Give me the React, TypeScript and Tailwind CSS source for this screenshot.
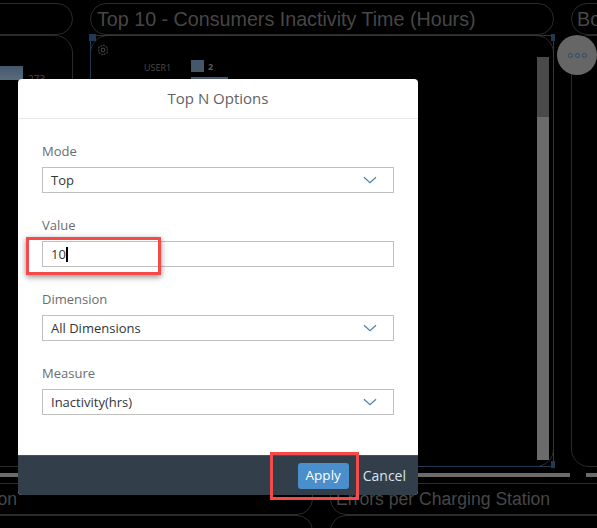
import React from 'react';

const fontStack = "font-['Open_Sans','Noto_Sans',sans-serif]";
const titleFont = "font-['Liberation_Sans',Arial,sans-serif]";

interface FieldProps {
  label: string;
  value: string;
  isSelect?: boolean;
  showCaret?: boolean;
}

const Chevron: React.FC = () => (
  <svg width="14" height="8" viewBox="0 0 14 8" fill="none" className="shrink-0">
    <path d="M1 1.2 7 6.6 13 1.2" stroke="#4f7fac" strokeWidth="1.2" />
  </svg>
);

const Field: React.FC<FieldProps> = ({ label, value, isSelect = true, showCaret = false }) => (
  <div className="flex flex-col">
    <label className="h-[25px] text-[13px] leading-[18px] text-[#6a6d70]">{label}</label>
    <div className="h-[26px] border border-[#bfbfbf] bg-white pl-2 pr-[16px] flex items-center justify-between">
      <span className="flex items-center text-[13px] leading-[20px] text-[#32363a]">
        {value}
        {showCaret && <span className="w-[2px] h-[15px] bg-black" />}
      </span>
      {isSelect && <Chevron />}
    </div>
  </div>
);

const GearIcon: React.FC = () => (
  <svg width="12" height="12" viewBox="0 0 12 12" fill="none" stroke="#3d3d3d" strokeWidth="1.2">
    <path d="M6 1 10.3 3.5V8.5L6 11 1.7 8.5V3.5Z" strokeDasharray="2 1" />
    <circle cx="6" cy="6" r="1.8" />
  </svg>
);

const Dashboard: React.FC = () => (
  <div className="flex flex-col pt-[3px]">
    {/* Top row of tiles */}
    <div className="grid grid-cols-[133px_464px_100px] gap-x-[17px] -ml-[60px] w-[760px]">
      <div className="h-[32px] rounded-[16px] border border-[#2b2b2b]" />
      <div className="h-[32px] rounded-[16px] border border-[#2b2b2b] pl-[6px] pt-[2px] flex items-center">
        <span className={`text-[19.7px] text-[#474747] whitespace-nowrap ${titleFont}`}>
          Top 10 - Consumers Inactivity Time (Hours)
        </span>
      </div>
      <div className="h-[32px] rounded-[16px] border border-[#2b2b2b] pl-[5px] pt-[2px] flex items-center">
        <span className={`text-[19.7px] text-[#474747] ${titleFont}`}>Bo</span>
      </div>

      <div className="h-[432px] rounded-[18px] border border-[#2b2b2b] relative">
        <div className="absolute left-0 top-[30px] w-[82px] h-[14px] bg-gradient-to-b from-[#45586b] to-[#5a6c7e]" />
        <span className="absolute left-[87px] top-[36px] text-[10px] text-[#4a4a4a]">273</span>
      </div>
      <div className="h-[432px] rounded-[18px] border border-[#2b2b2b] relative">
        {/* Selection outline */}
        <div className="absolute -left-px -top-px -right-px bottom-[-1px] border border-[#1f3a52]" />
        <div className="absolute -left-[2px] -top-[2px] w-[7px] h-[7px] bg-[#1f3a52]" />
        <div className="absolute -right-[2px] -top-[2px] w-[4px] h-[7px] bg-[#1f3a52]" />
        <div className="absolute -right-[2px] -bottom-[2px] w-[4px] h-[7px] bg-[#1f3a52]" />
        <div className="absolute left-[6px] top-[8px]">
          <GearIcon />
        </div>
        <span className="absolute left-[53px] top-[25px] text-[9px] text-[#4a4a4a]">USER1</span>
        <div className="absolute left-[100px] top-[24px] w-[13px] h-[12px] bg-[#45586b]" />
        <span className="absolute left-[117px] top-[24px] text-[9px] font-bold text-[#5a5a5a]">2</span>
        <div className="absolute left-[100px] top-[41px] w-[37px] h-[12px] bg-[#45586b]" />
        {/* Scrollbar of the chart */}
        <div className="absolute left-[446px] top-[21px] bottom-[6px] w-[12px] flex flex-col">
          <div className="h-[60px] bg-[#4a4a4a]" />
          <div className="flex-1 bg-[#6b6b6b]" />
        </div>
      </div>
      <div className="h-[432px] rounded-[18px] border border-[#2b2b2b]" />
    </div>

    {/* Horizontal scrollbar */}
    <div className="flex gap-x-[16px] mt-[6px] h-[4px]">
      <div className="w-[570px] bg-[#6b6b6b]" />
      <div className="flex-1 bg-[#6b6b6b]" />
    </div>

    {/* Lower row of tiles */}
    <div className="grid grid-cols-[373px_400px] gap-x-[17px] -ml-[60px] w-[790px] mt-[6px]">
      <div className="h-[32px] rounded-b-[16px] border border-[#2b2b2b] flex items-center justify-end pr-[295px]">
        <span className={`text-[17.6px] text-[#474747] ${titleFont}`}>on</span>
      </div>
      <div className="h-[32px] rounded-b-[16px] border border-[#2b2b2b] pl-[5px] flex items-center">
        <span className={`text-[17.6px] text-[#474747] whitespace-nowrap ${titleFont}`}>Errors per Charging Station</span>
      </div>
      <div className="h-[30px] rounded-t-[16px] border border-[#2b2b2b]" />
      <div className="h-[30px] rounded-t-[16px] border border-[#2b2b2b]" />
    </div>
  </div>
);

const App: React.FC = () => {
  return (
    <div className={`relative w-[597px] h-[528px] overflow-hidden bg-black ${fontStack}`}>
      <Dashboard />

      {/* Tile menu button */}
      <div className="absolute left-[557px] top-[35px] w-[40px] h-[40px] rounded-full bg-[#666666] flex items-center justify-center gap-[2px]">
        <span className="w-[5px] h-[5px] rounded-full border border-[#2c4a68]" />
        <span className="w-[5px] h-[5px] rounded-full border border-[#2c4a68]" />
        <span className="w-[5px] h-[5px] rounded-full border border-[#2c4a68]" />
      </div>

      {/* Dialog */}
      <div className="absolute left-[18px] top-[79px] w-[400px] h-[416px] bg-white rounded-[4px] overflow-hidden flex flex-col">
        <div className="h-[40px] shrink-0 border-b border-[#e8e8e8] flex items-center justify-center text-[15px] text-[#5f6266]">
          Top N Options
        </div>
        <div className="flex-1 px-[24px] pt-[23px] flex flex-col gap-y-[23px]">
          <Field label="Mode" value="Top" />
          <Field label="Value" value="10" isSelect={false} showCaret />
          <Field label="Dimension" value="All Dimensions" />
          <Field label="Measure" value="Inactivity(hrs)" />
        </div>
        <div className="h-[40px] shrink-0 bg-[#323e4a] border-t border-[#44525f] flex items-center justify-end pr-[12px] gap-x-[14px]">
          <button className="w-[51px] h-[26px] rounded-[3px] bg-[#4a8fcb] text-[13.5px] text-white">Apply</button>
          <button className="text-[14px] text-[#d5e4f2]">Cancel</button>
        </div>
      </div>

      {/* Red callouts */}
      <div className="absolute left-[26px] top-[237px] w-[135px] h-[38px] border-[3px] border-[#f64a4a] shadow-[0_2px_6px_rgba(0,0,0,0.45)]" />
      <div className="absolute left-[270px] top-[452px] w-[89px] h-[48px] border-[3px] border-[#f64a4a]" />
    </div>
  );
};

export default App;
